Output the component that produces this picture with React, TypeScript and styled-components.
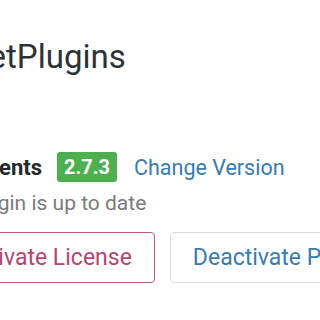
import React from "react";
import styled, { createGlobalStyle } from "styled-components";

const GlobalStyle = createGlobalStyle`
  html, body {
    margin: 0;
    padding: 0;
    background: #ffffff;
    overflow: hidden;
  }
  body {
    font-family: Roboto, "Liberation Sans", Arial, sans-serif;
    color: #23282d;
  }
`;

const Page = styled.div`
  margin-left: -84px;
  padding-top: 37px;
  width: 560px;
`;

const Title = styled.h1`
  margin: 0;
  font-size: 33px;
  font-weight: 400;
  line-height: 40px;
  color: #2c3338;
  white-space: nowrap;
`;

const Details = styled.section`
  margin-top: 75px;
  display: flex;
  flex-direction: column;
`;

const VersionRow = styled.div`
  display: flex;
  align-items: center;
  height: 30px;
`;

const Name = styled.strong`
  font-size: 22px;
  font-weight: 700;
  color: #23282d;
  white-space: nowrap;
`;

const Badge = styled.span`
  margin-left: 15px;
  height: 30px;
  padding: 0 7px;
  display: inline-flex;
  align-items: center;
  border-radius: 3px;
  background: #4cb050;
  color: #ffffff;
  font-size: 20px;
  font-weight: 700;
`;

const Link = styled.a`
  margin-left: 17px;
  font-size: 21.5px;
  color: #3a7bb0;
  text-decoration: none;
  white-space: nowrap;
`;

const Status = styled.p`
  margin: 8px 0 0 8px;
  font-size: 21px;
  line-height: 26px;
  color: #7a7a7a;
  white-space: nowrap;
`;

const Actions = styled.div`
  margin-top: 16px;
  display: flex;
  gap: 15px;
`;

const Button = styled.button<{ $tone: "danger" | "default" }>`
  height: 51px;
  padding: 0 22px;
  border-radius: 4px;
  background: #ffffff;
  border: 1px solid ${(p) => (p.$tone === "danger" ? "#c25a80" : "#dcdcde")};
  color: ${(p) => (p.$tone === "danger" ? "#b5466e" : "#3a7bb0")};
  font-family: Roboto, "Liberation Sans", Arial, sans-serif;
  font-size: 23px;
  white-space: nowrap;
  cursor: pointer;
`;

export default function App() {
  return (
    <>
      <GlobalStyle />
      <Page>
        <Title>WPGetPlugins</Title>
        <Details>
          <VersionRow>
            <Name>Components</Name>
            <Badge>2.7.3</Badge>
            <Link href="#">Change Version</Link>
          </VersionRow>
          <Status>This plugin is up to date</Status>
          <Actions>
            <Button $tone="danger">Deactivate License</Button>
            <Button $tone="default">Deactivate Plugin</Button>
          </Actions>
        </Details>
      </Page>
    </>
  );
}
